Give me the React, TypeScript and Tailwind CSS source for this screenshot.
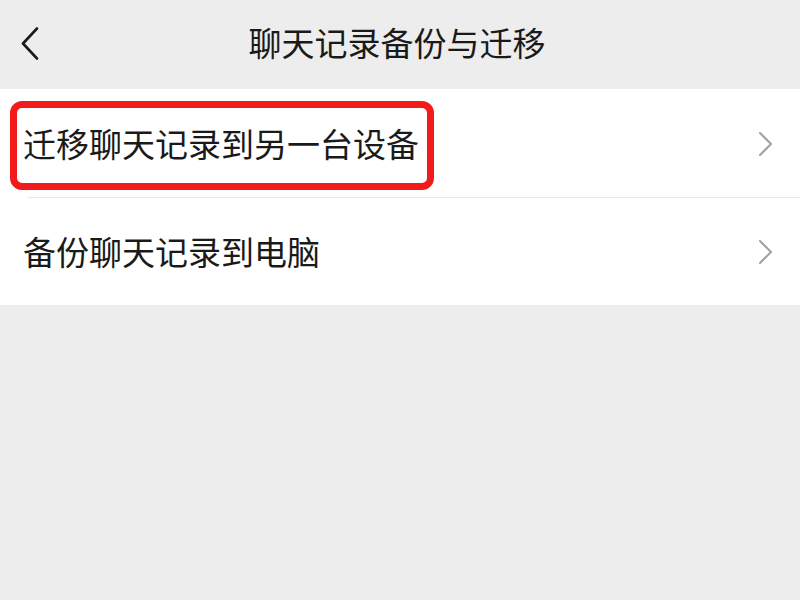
import React from "react";

const font = { fontFamily: '"Noto Sans CJK SC", "Noto Sans", sans-serif' };

function ChevronRight() {
  return (
    <svg width="16" height="26" viewBox="0 0 16 26" fill="none">
      <path d="M2 2 L13 13 L2 24" stroke="#a0a0a0" strokeWidth="2" strokeLinecap="round" strokeLinejoin="round" />
    </svg>
  );
}

export default function App() {
  return (
    <div className="w-[800px] h-[600px] bg-[#ededed] text-[#1a1a1a] relative overflow-hidden" style={font}>
      <div className="h-[89px] flex items-center relative">
        <div className="absolute left-[21px] top-[27px]">
          <svg width="18" height="33" viewBox="0 0 18 33" fill="none">
            <path d="M16 1.5 L2 16.5 L16 31.5" stroke="#1a1a1a" strokeWidth="2.6" strokeLinecap="round" strokeLinejoin="round" />
          </svg>
        </div>
        <div className="flex-1 text-center text-[33px] leading-none pr-[6px] mt-[-4px]">聊天记录备份与迁移</div>
      </div>
      <div className="bg-white">
        <div className="h-[109px] flex items-center justify-between pl-[23px] pr-[26px] relative">
          <span className="text-[33px] leading-none">迁移聊天记录到另一台设备</span>
          <ChevronRight />
          <div className="absolute left-[28px] right-0 bottom-0 h-px bg-[#e6e6e6]" />
        </div>
        <div className="h-[107px] flex items-center justify-between pl-[23px] pr-[26px]">
          <span className="text-[33px] leading-none">备份聊天记录到电脑</span>
          <ChevronRight />
        </div>
      </div>
      <div className="absolute left-[10px] top-[101px] w-[424px] h-[89px] border-[7px] border-[#f31a1a] rounded-[12px]" />
    </div>
  );
}
